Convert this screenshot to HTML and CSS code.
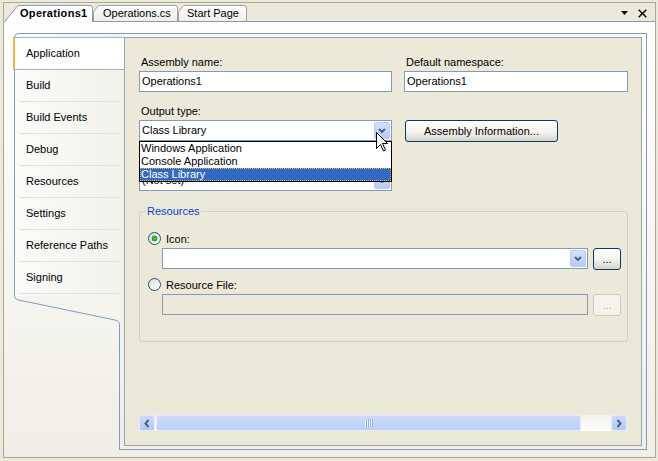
FILE: index.html
```html
<!DOCTYPE html>
<html>
<head>
<meta charset="utf-8">
<title>Operations1</title>
<link rel="stylesheet" href="styles.css">
</head>
<body>
<div class="frame">
  <div class="strip">
    <div class="tab tab-active">
      <svg class="tab-shape" width="89" height="17" viewBox="0 0 89 17"><path d="M0.5,17 L12.5,2 Q13.8,0.5 16,0.5 L86,0.5 Q88.5,0.5 88.5,3 L88.5,17" fill="#FFFFFF" stroke="#7F9DB9"/></svg>
      <span class="tab-label">Operations1</span>
    </div>
    <div class="tab tab-ops">
      <svg class="tab-shape" width="85" height="16" viewBox="0 0 85 16"><defs><linearGradient id="g1" x1="0" y1="0" x2="0" y2="1"><stop offset="0" stop-color="#FEFEFD"/><stop offset="1" stop-color="#EFEEE7"/></linearGradient></defs><path d="M0.5,16 L0.5,7 L4.5,1.5 Q5.5,0.5 7.5,0.5 L82,0.5 Q84.5,0.5 84.5,3 L84.5,16" fill="url(#g1)" stroke="#98A2A6"/></svg>
      <span class="tab-label">Operations.cs</span>
    </div>
    <div class="tab tab-start">
      <svg class="tab-shape" width="69" height="16" viewBox="0 0 69 16"><defs><linearGradient id="g2" x1="0" y1="0" x2="0" y2="1"><stop offset="0" stop-color="#FEFEFD"/><stop offset="1" stop-color="#EFEEE7"/></linearGradient></defs><path d="M0.5,16 L0.5,7 L4.5,1.5 Q5.5,0.5 7.5,0.5 L66,0.5 Q68.5,0.5 68.5,3 L68.5,16" fill="url(#g2)" stroke="#98A2A6"/></svg>
      <span class="tab-label">Start Page</span>
    </div>
    <div class="strip-icons">
      <svg class="ico-down" width="7" height="4" viewBox="0 0 7 4"><polygon points="0,0 7,0 3.5,4" fill="#000"/></svg>
      <svg class="ico-close" width="9" height="9" viewBox="0 0 9 9"><path d="M0.7,0.7 L8.3,8.3 M8.3,0.7 L0.7,8.3" stroke="#000" stroke-width="1.4" fill="none"/></svg>
    </div>
  </div>

  <div class="body">
    <div class="sidebar">
      <div class="pages">
        <div class="page page-active">Application</div>
        <div class="page">Build</div>
        <div class="page">Build Events</div>
        <div class="page">Debug</div>
        <div class="page">Resources</div>
        <div class="page">Settings</div>
        <div class="page">Reference Paths</div>
        <div class="page">Signing</div>
      </div>
      <svg class="slant" width="110" height="38" viewBox="0 0 110 38">
        <path d="M0,0 L0.5,0 Q0.5,3 3.5,3.8 L101,24 Q105.5,25 105.5,29 L110,29 L110,0 Z" fill="#F4F3EE"/>
        <path d="M0.5,0 Q0.5,3 3.5,3.8 L101,24 Q105.5,25 105.5,29 L105.5,38" fill="none" stroke="#7F9DB9"/>
      </svg>
      <div class="sidebar-rest"></div>
    </div>

    <div class="panel">
      <div class="inner">
        <div class="form">
          <div class="field">
            <span class="field-label">Assembly name:</span>
            <div class="textbox">Operations1</div>
          </div>
          <div class="field">
            <span class="field-label">Default namespace:</span>
            <div class="textbox">Operations1</div>
          </div>

          <div class="field row-next output-field">
            <span class="field-label">Output type:</span>
            <div class="combo">
              <span class="combo-text">Class Library</span>
              <span class="combo-btn"><svg width="8" height="5" viewBox="0 0 8 5"><path d="M1,1 L4,4 L7,1" fill="none" stroke="#4D6185" stroke-width="2"/></svg></span>
            </div>
            <div class="droplist">
              <div class="drop-item">Windows Application</div>
              <div class="drop-item">Console Application</div>
              <div class="drop-item sel">Class Library</div>
            </div>
            <svg class="cursor" width="13" height="20" viewBox="0 0 13 20"><path d="M0.5,0.5 L0.5,16.5 L4.5,12.5 L7.5,19 L9.5,18 L6.5,11.5 L11.5,11.5 Z" fill="#FFFFFF" stroke="#000000" stroke-linejoin="miter"/></svg>
          </div>
          <div class="field row-next">
            <div class="btn asm-btn">Assembly Information...</div>
          </div>

          <div class="field row-next">
            <span class="field-label"></span>
            <div class="combo">
              <span class="combo-text">(Not set)</span>
              <span class="combo-btn"><svg width="8" height="5" viewBox="0 0 8 5"><path d="M1,1 L4,4 L7,1" fill="none" stroke="#4D6185" stroke-width="2"/></svg></span>
            </div>
          </div>
          <div class="field row-next"></div>

          <fieldset class="group">
            <legend>Resources</legend>
            <div class="radio-row">
              <span class="radio on"></span>
              <span>Icon:</span>
            </div>
            <div class="ctrl-row">
              <div class="combo wide">
                <span class="combo-text"></span>
                <span class="combo-btn"><svg width="8" height="5" viewBox="0 0 8 5"><path d="M1,1 L4,4 L7,1" fill="none" stroke="#4D6185" stroke-width="2"/></svg></span>
              </div>
              <div class="btn dots">...</div>
            </div>
            <div class="radio-row rf-row">
              <span class="radio"></span>
              <span>Resource File:</span>
            </div>
            <div class="ctrl-row">
              <div class="textbox wide disabled"></div>
              <div class="btn dots btn-disabled">...</div>
            </div>
          </fieldset>
        </div>

        <div class="hscroll">
          <span class="sb-btn"><svg width="6" height="9" viewBox="0 0 6 9"><path d="M4.5,1 L1.5,4.5 L4.5,8" fill="none" stroke="#4D6185" stroke-width="2"/></svg></span>
          <span class="sb-thumb"><span class="grip"></span></span>
          <span class="sb-track"></span>
          <span class="sb-btn"><svg width="6" height="9" viewBox="0 0 6 9"><path d="M1.5,1 L4.5,4.5 L1.5,8" fill="none" stroke="#4D6185" stroke-width="2"/></svg></span>
        </div>
      </div>
    </div>
  </div>
</div>
</body>
</html>
```

FILE: styles.css
```css
* { box-sizing: border-box; }
html, body { margin: 0; padding: 0; }
body {
  background: #ECE9D8;
  font-family: "Liberation Sans", Arial, sans-serif;
  font-size: 11px;
  color: #000;
  width: 658px;
  height: 461px;
  overflow: hidden;
}

.frame {
  margin: 2px 0 0 3px;
  width: 653px;
  height: 456px;
  border: 1px solid #ACA899;
  display: flex;
  flex-direction: column;
}

/* ---- document tabs ---- */
.strip {
  height: 18px;
  flex: none;
  display: flex;
  align-items: flex-end;
}
.tab { position: relative; height: 16px; flex: none; }
.tab-shape { position: absolute; left: 0; top: 0; display: block; }
.tab-label { position: relative; display: block; line-height: 16px; white-space: nowrap; }
.tab-active { width: 89px; height: 17px; margin-bottom: -1px; z-index: 2; }
.tab-active .tab-label { padding-left: 16px; font-weight: bold; letter-spacing: 0.3px; }
.tab-ops { width: 85px; }
.tab-ops .tab-label { padding-left: 10px; }
.tab-start { width: 69px; }
.tab-start .tab-label { padding-left: 9px; }
.strip-icons {
  margin-left: auto;
  align-self: stretch;
  display: flex;
  align-items: center;
  padding: 2px 8px 0 0;
}
.ico-down { display: block; }
.ico-close { display: block; margin-left: 10px; }

/* ---- body ---- */
.body {
  flex: 1;
  border-top: 1px solid #7F9DB9;
  background: linear-gradient(#FFFFFF, #F0EEE5);
  padding: 11px 8px 7px 10px;
  display: flex;
}

.sidebar { width: 110px; flex: none; display: flex; flex-direction: column; }
.pages {
  border-left: 1px solid #7F9DB9;
  border-top: 1px solid #7F9DB9;
  border-top-left-radius: 5px;
  padding: 3px 0 2px;
  background: linear-gradient(to right, #FBFBF9, #F2F1EB);
}
.page {
  height: 32px;
  line-height: 31px;
  margin: 0 5px 0 4px;
  padding-left: 7px;
  border-bottom: 1px solid #E3E1D7;
  white-space: nowrap;
}
.page-active {
  height: 33px;
  margin: 0 0 0 -2px;
  padding-left: 11px;
  border-left: 2px solid #F5B43C;
  border-top: 1px solid #A5B1BD;
  border-bottom: 1px solid #A5B1BD;
  background: #FFFFFF;
}
.slant { display: block; flex: none; }
.sidebar-rest {
  flex: 1;
  margin-left: 105px;
  border-left: 1px solid #7F9DB9;
  border-bottom: 1px solid #7F9DB9;
}

.panel {
  flex: 1;
  border-top: 1px solid #7F9DB9;
  border-right: 1px solid #7F9DB9;
  border-bottom: 1px solid #7F9DB9;
  padding: 3px 4px 3px 0;
  display: flex;
}
.inner {
  flex: 1;
  border: 1px solid #97A5B0;
  background: #ECE9D8;
  padding: 18px 13px 14px 14px;
  display: flex;
  flex-direction: column;
}

/* ---- form ---- */
.form {
  display: grid;
  grid-template-columns: 253px 224px;
  column-gap: 12px;
  align-items: start;
}
.row-next { margin-top: 13px; }
.field-label {
  display: block;
  height: 13px;
  line-height: 13px;
  padding-left: 2px;
  margin-bottom: 2px;
  white-space: nowrap;
}
.textbox {
  height: 21px;
  border: 1px solid #7F9DB9;
  background: #FFFFFF;
  padding-left: 2px;
  line-height: 19px;
  white-space: nowrap;
}
.textbox.disabled { background: #ECE9D8; }

.combo {
  display: flex;
  height: 21px;
  border: 1px solid #7F9DB9;
  background: #FFFFFF;
  padding: 1px;
}
.combo-text { flex: 1; padding-left: 1px; line-height: 17px; white-space: nowrap; overflow: hidden; }
.combo-btn {
  width: 16px;
  height: 17px;
  flex: none;
  border: 1px solid #BACBF3;
  border-radius: 2px;
  background: linear-gradient(#D3DFFC, #B7CAF6);
  display: flex;
  align-items: center;
  justify-content: center;
}
.combo-btn svg { display: block; }

.output-field { position: relative; }
.droplist {
  position: absolute;
  left: 0;
  top: 36px;
  width: 253px;
  border: 1px solid #000000;
  background: #FFFFFF;
  z-index: 5;
}
.drop-item { height: 13px; line-height: 13px; padding-left: 1px; white-space: nowrap; }
.drop-item.sel {
  background: #316AC5;
  color: #FFFFFF;
  outline: 1px dotted #E8B25A;
  outline-offset: -1px;
}
.cursor { position: absolute; left: 237px; top: 27px; z-index: 6; display: block; }

.btn {
  height: 22px;
  border: 1px solid #003C74;
  border-radius: 3px;
  background: linear-gradient(#FFFFFF, #F3F2EE 55%, #D8D3C8);
  text-align: center;
  line-height: 20px;
  white-space: nowrap;
}
.asm-btn { width: 153px; margin: 15px 0 0 1px; }
.dots { width: 28px; flex: none; }
.btn-disabled {
  border-color: #CAC8BB;
  background: #F5F4EA;
  color: #ACA899;
}

.group {
  grid-column: 1 / -1;
  margin: 14px 0 0;
  border: 1px solid #D0D0BF;
  border-radius: 3px;
  padding: 14px 6px 25px 8px;
  min-width: 0;
}
.group legend {
  color: #0046D5;
  padding: 0 1px;
  margin-left: -2px;
  line-height: 13px;
}
.radio-row { display: flex; align-items: center; height: 13px; }
.rf-row { margin-top: 8px; }
.radio {
  width: 13px;
  height: 13px;
  flex: none;
  border-radius: 50%;
  border: 1px solid #1C5180;
  background: linear-gradient(135deg, #DCDBD4, #FFFFFF);
  margin-right: 5px;
}
.radio.on {
  background: radial-gradient(circle, #5BD35B 0, #25A725 2px, #1E8F1E 2.6px, transparent 3.2px),
              linear-gradient(135deg, #DCDBD4, #FFFFFF);
}
.ctrl-row { display: flex; gap: 5px; margin: 3px 0 0 14px; align-items: flex-start; }
.wide { width: 426px; flex: none; }

/* ---- scrollbar ---- */
.hscroll {
  margin-top: auto;
  width: 488px;
  height: 16px;
  flex: none;
  display: flex;
  background: linear-gradient(#F3F1EC, #FEFEFB);
}
.sb-btn {
  width: 16px;
  height: 16px;
  flex: none;
  border: 1px solid #E4EBFD;
  border-radius: 2px;
  background: linear-gradient(#CCDAFC, #B5C8F6);
  display: flex;
  align-items: center;
  justify-content: center;
}
.sb-btn svg { display: block; }
.sb-thumb {
  width: 425px;
  flex: none;
  margin-left: 1px;
  border: 1px solid #E2EAFD;
  border-radius: 2px;
  background: linear-gradient(#CCDAFD, #BDD0FA);
  display: flex;
  align-items: center;
  justify-content: center;
}
.grip {
  width: 8px;
  height: 8px;
  background: repeating-linear-gradient(to right, #EEF3FE 0 1px, #8DAEF3 1px 2px);
}
.sb-track { flex: 1; }
```
